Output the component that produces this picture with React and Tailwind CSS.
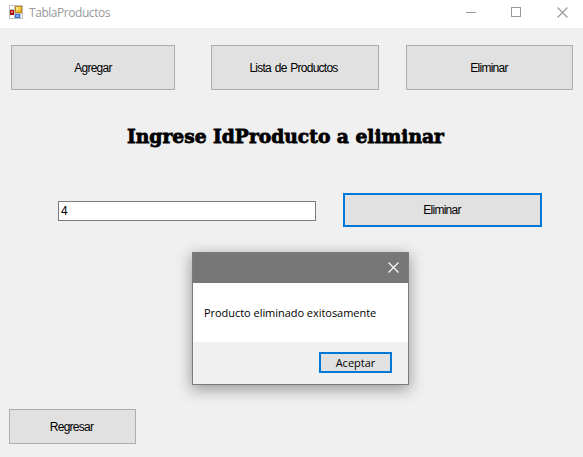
function FormButton({ children, className }) {
  return (
    <button
      className={`flex shrink-0 items-center justify-center bg-[#e1e1e1] font-['Liberation_Sans',Arial,sans-serif] text-[12px] leading-none tracking-[-0.76px] [word-spacing:1.2px] whitespace-nowrap text-black ${className}`}
    >
      {children}
    </button>
  );
}

function FormIcon() {
  return (
    <svg width="14" height="14" viewBox="0 0 14 14" shapeRendering="crispEdges" className="shrink-0">
      <defs>
        <linearGradient id="gold" x1="0" y1="0" x2="1" y2="1">
          <stop offset="0" stopColor="#fff0a0" />
          <stop offset="1" stopColor="#e9a900" />
        </linearGradient>
      </defs>
      <rect width="14" height="14" fill="#c2c2c2" />
      <rect x="1" y="1" width="4" height="3" fill="#fff" />
      <rect x="1" y="10" width="4" height="3" fill="#fff" />
      <rect x="12" y="9" width="1" height="4" fill="#fff" />
      <rect x="1" y="5" width="4" height="5" fill="#a80c0c" />
      <rect x="2" y="6" width="2" height="2" fill="#ee7468" />
      <rect x="6" y="1" width="7" height="7" fill="#bd8a13" />
      <rect x="7" y="2" width="5" height="5" fill="url(#gold)" />
      <rect x="6" y="9" width="5" height="4" fill="#3f74d8" />
      <rect x="7" y="10" width="3" height="2" fill="#78aaf5" />
    </svg>
  );
}

function Cross({ color }) {
  return (
    <svg width="11" height="11" viewBox="0 0 11 11" fill="none" stroke={color} strokeWidth="1.1" className="shrink-0">
      <path d="M.5.5l10 10M10.5.5l-10 10" />
    </svg>
  );
}

export default function App() {
  return (
    <div className="relative flex h-[457px] w-[583px] flex-col overflow-hidden bg-[#f0f0f0]">
      <header className="flex h-7 shrink-0 items-start bg-white pt-[5px] pr-[15px] pl-[9px]">
        <FormIcon />
        <span className="ml-[6px] font-['Open_Sans','Noto_Sans',sans-serif] text-[12px] leading-4 tracking-[-0.45px] text-[#999]">
          TablaProductos
        </span>
        <div className="mt-[2px] ml-auto flex">
          <svg width="10" height="10" shapeRendering="crispEdges" className="mr-[35px] shrink-0">
            <path d="M0 5.5h10" stroke="#999" />
          </svg>
          <svg width="10" height="10" shapeRendering="crispEdges" fill="none" className="mr-9 shrink-0">
            <path d="M.5.5h9v9h-9z" stroke="#999" />
          </svg>
          <Cross color="#999" />
        </div>
      </header>

      <nav className="mt-[17px] flex h-[45px] shrink-0 pl-[11px]">
        <FormButton className="w-[164px] border border-[#adadad] pt-px">Agregar</FormButton>
        <FormButton className="ml-9 w-[168px] border border-[#adadad] pt-px pr-[3px]">Lista de Productos</FormButton>
        <FormButton className="ml-[27px] w-[167px] border border-[#adadad] pt-px pr-px">Eliminar</FormButton>
      </nav>

      <h1 className="mt-8 ml-[127px] h-7 font-['DejaVu_Serif',serif] text-[18.7px] leading-7 font-bold whitespace-nowrap text-black [-webkit-text-stroke:0.8px_black]">
        Ingrese IdProducto a eliminar
      </h1>

      <div className="mt-[43px] flex h-[34px] shrink-0 items-start pl-[58px]">
        <div className="mt-2 h-5 w-[258px] border border-[#7a7a7a] bg-white pl-[2px] font-['Liberation_Sans',Arial,sans-serif] text-[12px] leading-[19px] text-black">
          4
        </div>
        <FormButton className="ml-[27px] h-[34px] w-[199px] border-2 border-[#0078d7] pr-px pb-px">Eliminar</FormButton>
      </div>

      <FormButton className="mt-auto mb-[13px] ml-[9px] h-[35px] w-[127px] border border-[#adadad] pt-px pr-[2px]">
        Regresar
      </FormButton>

      <div className="absolute top-[252px] left-[192px] flex h-[133px] w-[217px] flex-col border border-[#7b7b7b] bg-white shadow-[0_4px_14px_1px_rgba(0,0,0,0.35)]">
        <div className="flex h-[30px] items-start justify-end bg-[#777] pt-[9px] pr-[9px]">
          <Cross color="#fff" />
        </div>
        <p className="h-[59px] pt-[22px] pl-[11px] font-['Open_Sans',sans-serif] text-[11px] leading-4 font-medium tracking-[-0.04px] whitespace-nowrap text-black">
          Producto eliminado exitosamente
        </p>
        <div className="flex flex-1 items-start justify-end bg-[#f0f0f0] pt-[10px] pr-4">
          <button className="flex h-[21px] w-[73px] items-center justify-center border-2 border-[#0078d7] bg-[#e1e1e1] font-['Open_Sans',sans-serif] text-[11px] leading-none font-medium text-black">
            Aceptar
          </button>
        </div>
      </div>
    </div>
  );
}
